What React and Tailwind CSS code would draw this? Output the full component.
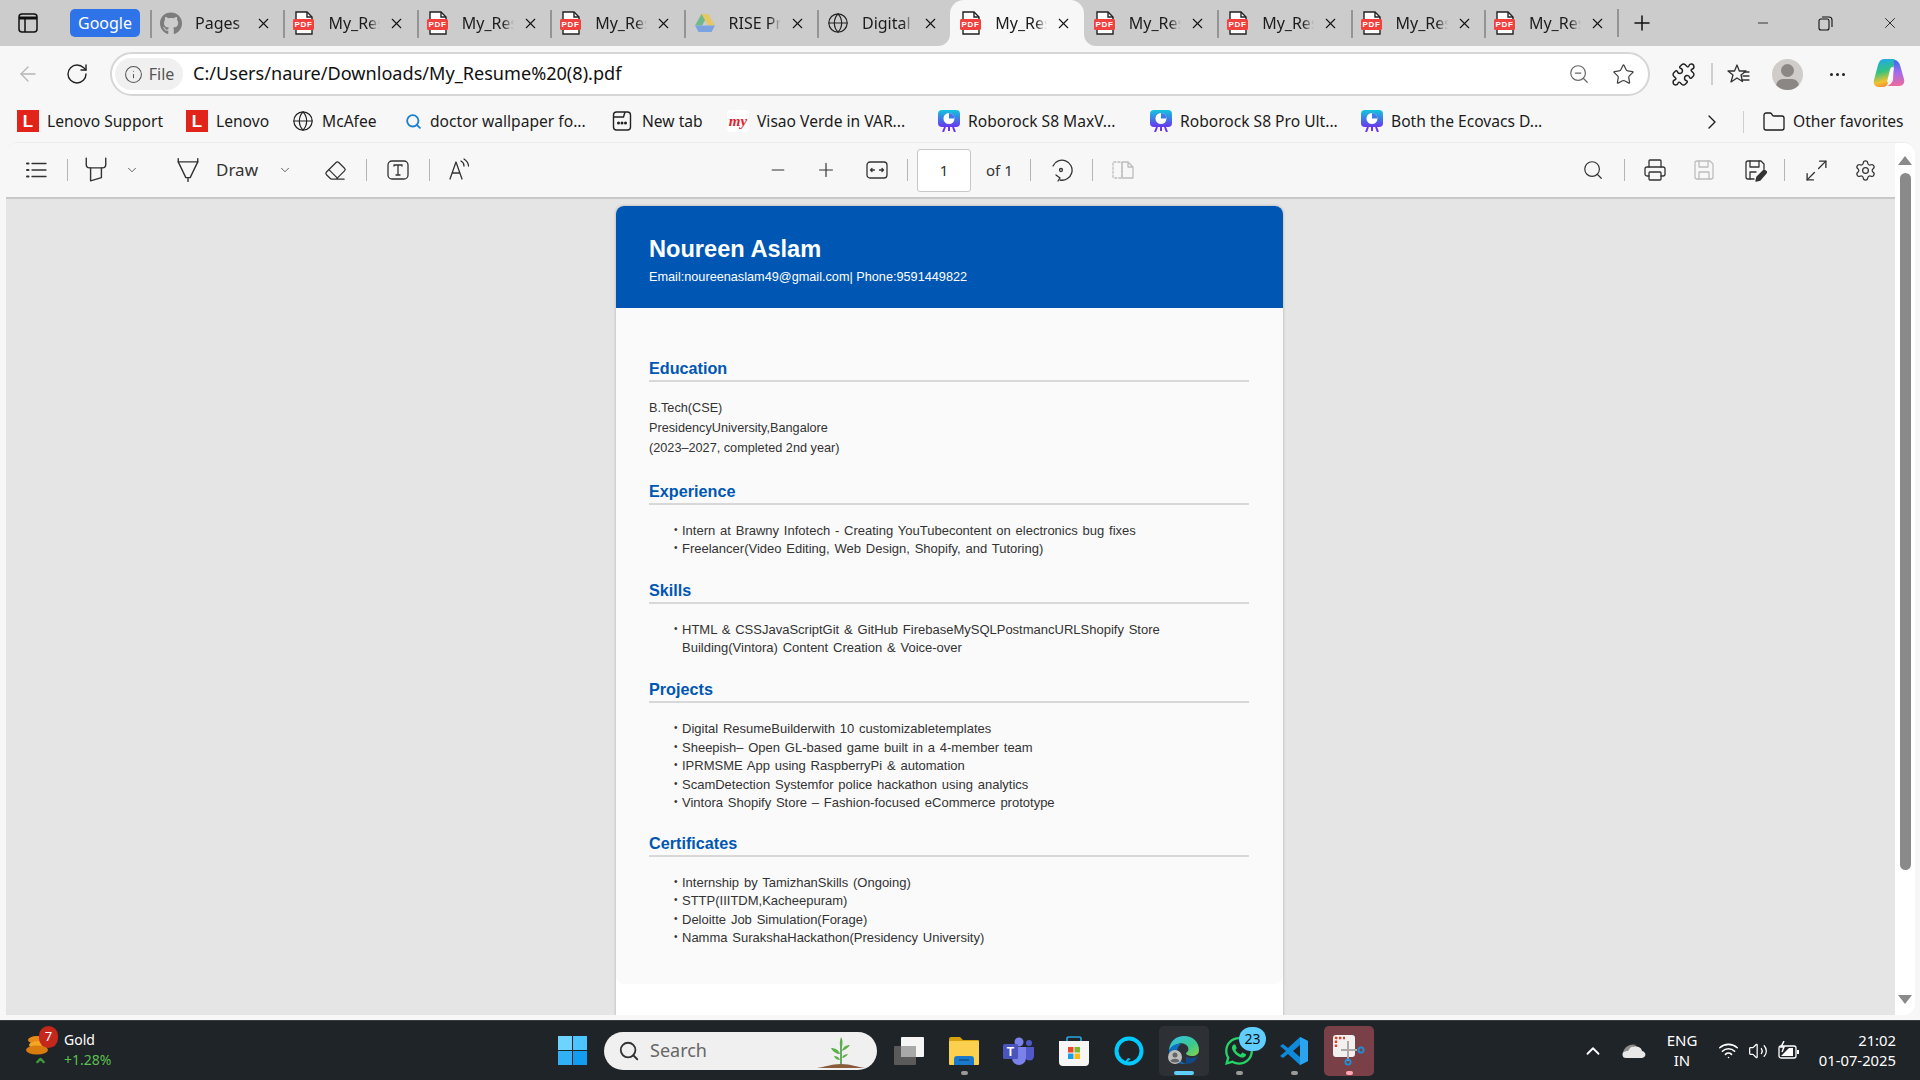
import React from 'react';
import { ArrowLeft, Info, ZoomOut, Star, X, Plus, Minus, Globe, Search, ChevronDown, ChevronRight, ChevronUp, Eraser, Settings, Printer, Wifi, Volume2, Maximize2, Folder, RotateCw, Puzzle } from 'lucide-react';
import { FaGithub, FaWhatsapp } from 'react-icons/fa';

// favicons
const PdfIcon = () => (
  <svg width="21" height="24" viewBox="0 0 21 24" className="shrink-0">
    <path d="M3 1h11l5 5v17H3z" fill="#fff" stroke="#222" strokeWidth="1.4" />
    <path d="M14 1v5h5" fill="none" stroke="#222" strokeWidth="1.4" />
    <rect x="0" y="8" width="21" height="11" rx="1.5" fill="#f0413f" />
    <text x="10.5" y="16.4" textAnchor="middle" fontSize="8" fontWeight="700" fontFamily="Liberation Sans" letterSpacing="0.6" fill="#fff">PDF</text>
  </svg>
);

const DriveIcon = () => (
  <svg width="22" height="20" viewBox="0 0 22 20" className="shrink-0">
    <path d="M7.5 1h7L8 12.500H1z" fill="#6fb98a" />
    <path d="M14.500 1 21 12.500h-7L7.500 1z" fill="#e6c765" />
    <path d="M1 12.500h20L17.500 19h-13z" fill="#7ba3e0" />
  </svg>
);

const LenovoIcon = () => (
  <div className="w-[22px] h-[22px] bg-[#e2231a] flex items-center justify-center text-white font-bold text-[17px] font-['Liberation_Sans'] shrink-0">L</div>
);

const NewTabIcon = () => (
  <svg width="20" height="22" viewBox="0 0 20 22" fill="none" stroke="#222" strokeWidth="1.4" className="shrink-0">
    <rect x="1.500" y="2" width="17" height="18" rx="3" />
    <path d="M1.500 7h10l1.500-5" />
    <circle cx="6.500" cy="13" r="0.8" fill="#222" />
    <circle cx="10" cy="13" r="0.8" fill="#222" />
    <circle cx="13.500" cy="13" r="0.8" fill="#222" />
  </svg>
);

const MyIcon = () => (
  <div className="w-[22px] h-[22px] bg-white rounded flex items-center justify-center text-[#e3202a] italic font-bold text-[15px] font-['Liberation_Serif'] shrink-0">my</div>
);

const RoboIcon = () => (
  <svg width="22" height="22" viewBox="0 0 22 22" className="shrink-0">
    <defs>
      <linearGradient id="robo" x1="0" y1="0" x2="0" y2="1">
        <stop offset="0" stopColor="#12c6dc" />
        <stop offset="1" stopColor="#6a35ee" />
      </linearGradient>
    </defs>
    <rect x="0" y="0" width="22" height="17" rx="4" fill="url(#robo)" />
    <circle cx="11" cy="8.500" r="5.500" fill="#fff" />
    <path d="M11 8.500V3a5.500 5.500 0 0 1 5.500 5.500z" fill="#3a7cee" />
    <path d="M7 17l-2 5M15 17l2 5M11 17v4" stroke="#6a35ee" strokeWidth="2" />
  </svg>
);

// pdf toolbar drawings
const Stroke = ({ w = 24, h = 24, vb = '0 0 24 24', c = '#333', sw = 1.3, children }) => (
  <svg width={w} height={h} viewBox={vb} fill="none" stroke={c} strokeWidth={sw} strokeLinecap="round" strokeLinejoin="round">{children}</svg>
);

const ListIcon = () => <Stroke><path d="M7 5.500h14M7 12h14M7 18.500h14" /><path d="M2 5.500h1.500M2 12h1.500M2 18.500h1.500" strokeWidth="2" /></Stroke>;
const HighlightIcon = () => <Stroke w={26} h={26}><path d="M3 1v6c0 2 1 3 3 3h12c2 0 3-1 3-3V1" /><path d="M7 10v12l10-3v-9" /></Stroke>;
const PenIcon = () => <Stroke w={26} h={26}><path d="M3 1.500v3h18v-3" /><path d="M3 4.500 10 19h4l7-14.500" /><path d="M12 19v3.500" /></Stroke>;
const TextBoxIcon = () => <Stroke><rect x="2" y="3" width="20" height="18" rx="4" /><path d="M8 8V7h8v1M12 7v10M10 17h4" /></Stroke>;
const ReadIcon = () => <Stroke><path d="M3 21 9 4l6 17M5 15h8" /><path d="M14 3c2 1 3 3 3 5M17 1c3 2 4.500 4 4.500 7" /></Stroke>;
const FitIcon = () => <Stroke><rect x="2" y="4" width="20" height="16" rx="3" /><path d="M5.500 12h4M5.500 12l1.500-1.500M5.500 12l1.500 1.500M18.500 12h-4M18.500 12 17 10.500M18.500 12 17 13.500" /></Stroke>;
const RotateIcon = () => <Stroke><path d="M4 8a10 10 0 1 1 7 14" /><path d="M7 19l4 3-2 3" transform="translate(0 -2)" /><circle cx="12" cy="12" r="1.500" /></Stroke>;
const PagesIcon = () => <Stroke c="#bdbdbd"><rect x="2" y="4" width="9" height="16" rx="1" strokeDasharray="2 2" /><path d="M11 4h6l5 5v11H11zM17 4v5h5" /></Stroke>;
const SaveIcon = ({ c = '#333' }) => <Stroke c={c}><path d="M3 5a2 2 0 0 1 2-2h13l3 3v13a2 2 0 0 1-2 2H5a2 2 0 0 1-2-2z" /><path d="M7 3v6h9V3M7 21v-7h10v7" /></Stroke>;
const SaveAsIcon = () => (
  <Stroke><path d="M11 21H5a2 2 0 0 1-2-2V5a2 2 0 0 1 2-2h13l3 3v5" /><path d="M7 3v6h9V3M7 21v-7h6" /><path d="M13 23l1-4 7-7 3 2-7 8z" fill="#333" /></Stroke>
);
const FavListIcon = () => <Stroke><path d="M10 3l2.300 6H19l-5 4 1.500 6.500L10 16l-6 4 2-7-5-4h6.500z" /><path d="M17 10h5M16 14h6M15 18h7" /></Stroke>;

const Copilot = () => (
  <svg width="32" height="32" viewBox="0 0 32 32">
    <defs>
      <linearGradient id="cpa" x1="0.3" y1="0" x2="0.5" y2="1">
        <stop offset="0" stopColor="#1ea8f0" /><stop offset="0.45" stopColor="#34c47c" /><stop offset="0.8" stopColor="#f2c230" /><stop offset="1" stopColor="#f28a30" />
      </linearGradient>
      <linearGradient id="cpb" x1="0.5" y1="0" x2="0.5" y2="1">
        <stop offset="0" stopColor="#2f6ff0" /><stop offset="0.5" stopColor="#a86bea" /><stop offset="1" stopColor="#ee6a9a" />
      </linearGradient>
    </defs>
    <path d="M11 1h9c2 0 2.500 1.500 2 3l-7 21c-1 3-3 4-5 4H6c-4 0-6-3-5-7l4-15c1-4 3-6 6-6z" fill="url(#cpa)" />
    <path d="M21 2c3 0 5 2 6 5l4 14c1 4-1 7-5 7H14c3-1 5-3 6-6z" fill="url(#cpb)" />
    <path d="M19 9c1.500 0 2 1 1.600 2.400l-3 9c-.6 1.800-1.600 3-3 4-.5-1-.3-2 0-3l2-8c.3-2 1-4.400 2.400-4.400z" fill="#fff" />
  </svg>
);

// taskbar drawings
const WinLogo = () => (
  <div className="grid grid-cols-2 gap-[1px] w-[29px] h-[29px]">
    <div className="bg-[#6fd3ff]" /><div className="bg-[#4cc4ff]" />
    <div className="bg-[#30b0f5]" /><div className="bg-[#129df0]" />
  </div>
);

const TaskView = () => (
  <svg width="32" height="30" viewBox="0 0 32 30">
    <rect x="1" y="10" width="22" height="19" rx="1" fill="#5a5a5a" />
    <rect x="8" y="1" width="23" height="20" rx="1" fill="#f5f5f5" />
    <rect x="8" y="10" width="15" height="11" fill="#a8a8a8" />
  </svg>
);

const FolderIcon = () => (
  <svg width="32" height="30" viewBox="0 0 32 30">
    <path d="M1 3a2 2 0 0 1 2-2h9l3 3h15a1 1 0 0 1 1 1v3H1z" fill="#d9a00f" />
    <rect x="1" y="5" width="30" height="24" rx="1" fill="#fbd04f" />
    <path d="M6 29v-6a3 3 0 0 1 3-3h14a3 3 0 0 1 3 3v6z" fill="#1b79c9" />
    <path d="M11 24h10" stroke="#0d4f8f" strokeWidth="1.500" />
  </svg>
);

const TeamsIcon = () => (
  <svg width="32" height="28" viewBox="0 0 32 28">
    <circle cx="16" cy="5" r="4.500" fill="#7b83eb" />
    <circle cx="26" cy="6" r="3" fill="#5059c9" />
    <path d="M22 10h9v9a4 4 0 0 1-9 0z" fill="#5059c9" />
    <path d="M9 10h14v11a7 7 0 0 1-14 0z" fill="#7b83eb" />
    <rect x="0" y="7" width="15" height="15" rx="1.500" fill="#4b53bc" />
    <text x="7.500" y="19" textAnchor="middle" fontSize="12" fontWeight="700" fontFamily="Liberation Sans" fill="#fff">T</text>
  </svg>
);

const StoreIcon = () => (
  <svg width="30" height="30" viewBox="0 0 30 30">
    <path d="M8 6V2.500C8 1.500 9 1 10 1h10c1 0 2 .5 2 1.500V6" fill="none" stroke="#27a8e0" strokeWidth="1.600" />
    <path d="M0 5h30v21a4 4 0 0 1-4 4H4a4 4 0 0 1-4-4z" fill="#f6f6f6" />
    <rect x="9" y="11" width="5.500" height="5.500" fill="#e8492b" />
    <rect x="15.500" y="11" width="5.500" height="5.500" fill="#7db92a" />
    <rect x="9" y="17.500" width="5.500" height="5.500" fill="#1a9fe5" />
    <rect x="15.500" y="17.500" width="5.500" height="5.500" fill="#fdb813" />
  </svg>
);

const AlexaIcon = () => (
  <svg width="30" height="30" viewBox="0 0 30 30">
    <circle cx="15" cy="15" r="12.500" fill="none" stroke="#00caff" strokeWidth="4" />
    <path d="M9 28l5-6 3 1z" fill="#00caff" />
  </svg>
);

const EdgeIcon = () => (
  <svg width="32" height="32" viewBox="0 0 32 32">
    <defs>
      <linearGradient id="edg" x1="0" y1="0" x2="1" y2="1">
        <stop offset="0" stopColor="#35c1f1" /><stop offset="0.6" stopColor="#3ac98d" /><stop offset="1" stopColor="#8ed24a" />
      </linearGradient>
    </defs>
    <path d="M1 15C2 6 8 1 16 1c9 0 15 6 15 14 0 4-3 6-7 6-3 0-6-1-6-3 2-1 3-3 2-6-2-4-8-5-12-2-4 2-6 5-7 5z" fill="url(#edg)" />
    <path d="M1 15c3-5 8-7 12-6-4 3-5 8-3 13 2 4 5 6 8 7-8 1-18-5-17-14z" fill="#0c6fc2" />
    <path d="M18 29c6 0 10-3 12-8-3 2-8 3-12 1z" fill="#114a8b" />
    <circle cx="7" cy="22" r="7" fill="#bdbdbd" />
    <circle cx="7" cy="20" r="2.500" fill="#666" />
    <path d="M2.500 26c1-3 8-3 9 0-2 2-7 2-9 0z" fill="#666" />
  </svg>
);

const VsCode = () => (
  <svg width="30" height="30" viewBox="0 0 30 30">
    <path d="M21 1l8 4v20l-8 4L9 18l-5 4-3-2 6-5-6-5 3-2 5 4z" fill="#0f8ad8" />
    <path d="M21 1l8 4v20l-8 4z" fill="#2aa4ee" />
    <path d="M21 9l-7 6 7 6z" fill="#1f2428" />
  </svg>
);

const SnipIcon = () => (
  <svg width="32" height="32" viewBox="0 0 32 32">
    <rect x="0" y="0" width="22" height="22" rx="3" fill="#f3f1f0" />
    <path d="M3 12V3h9" fill="none" stroke="#d9432a" strokeWidth="2.400" strokeDasharray="2.400 1.600" />
    <path d="M15 6v20M8 15h16" stroke="#b0a9a9" strokeWidth="2" />
    <circle cx="15" cy="27" r="2.600" fill="none" stroke="#1c8fd8" strokeWidth="1.800" />
    <circle cx="28" cy="15" r="2.600" fill="none" stroke="#1c8fd8" strokeWidth="1.800" />
  </svg>
);

const Plant = () => (
  <svg width="48" height="34" viewBox="0 0 48 34">
    <path d="M0 32c8-1 14-4 24-4s16 3 24 4z" fill="#8a5a3a" />
    <path d="M24 29V8" stroke="#3f8f3a" strokeWidth="1.500" />
    <path d="M24 14C22 8 23 4 24 1c2 3 2 8 0 13zM23 18c-3 0-7-2-9-6 4 0 8 2 9 6zM25 15c3-1 6-3 8-6-4 0-7 2-8 6zM23 24c-2 0-5-1-6-4 3 0 5 1 6 4zM25 22c2 0 5-2 6-4-3 0-5 1-6 4z" fill="#5bb04a" />
  </svg>
);

const Coins = () => (
  <svg width="24" height="20" viewBox="0 0 24 20">
    <ellipse cx="11" cy="5" rx="9" ry="4" fill="#e88a17" />
    <ellipse cx="13" cy="10" rx="10" ry="4" fill="#f5a623" />
    <ellipse cx="11" cy="15" rx="11" ry="4.500" fill="#d97c10" />
  </svg>
);

const OneDrive = () => (
  <svg width="24" height="16" viewBox="0 0 24 16">
    <path d="M5 8a6 6 0 0 1 11-3c-3 0-5 1-6 3z" fill="#9a9a9a" />
    <path d="M4 15a3.500 3.500 0 0 1 0-7c1-3 4-4.500 7-4 2-1 8-1 9 4 5 1 4 7 0 7z" fill="#e8e8e8" />
    <path d="M1 9c2-6 8-9 14-7-4 0-7 2-9 6-2 0-4 0-5 1z" fill="#8f8f8f" />
  </svg>
);

const Battery = () => (
  <svg width="22" height="20" viewBox="0 0 22 20" fill="none" stroke="#fff" strokeWidth="1.300">
    <rect x="1" y="5" width="17" height="12" rx="2" />
    <path d="M20 9v4" strokeWidth="2" />
    <path d="M3 15l8-8h4v8z" fill="#fff" stroke="none" />
    <path d="M6 0 3 6h3l-2 5" strokeWidth="1.500" />
  </svg>
);

// data
const TABS = [
  { icon: <div className="w-[22px] flex justify-center shrink-0"><FaGithub className="text-[#7c7c7c]" size={23} /></div>, label: 'Pages' },
  { label: 'My_Resume' },
  { label: 'My_Resume' },
  { label: 'My_Resume' },
  { icon: <DriveIcon />, label: 'RISE Program' },
  { icon: <Globe size={22} strokeWidth={1.3} className="text-[#222] shrink-0" />, label: 'Digital', corner: 'br' },
  { label: 'My_Resume', active: true },
  { label: 'My_Resume', corner: 'bl', noSep: true },
  { label: 'My_Resume' },
  { label: 'My_Resume' },
  { label: 'My_Resume' },
];

const BOOKMARKS = [
  { icon: <LenovoIcon />, label: 'Lenovo Support', w: 'w-[169px]' },
  { icon: <LenovoIcon />, label: 'Lenovo', w: 'w-[106px]' },
  { icon: <Globe size={22} strokeWidth={1.3} className="text-[#222] shrink-0" />, label: 'McAfee', w: 'w-[112px]' },
  { icon: <div className="w-[18px] flex justify-center shrink-0"><Search size={17} strokeWidth={2.600} className="text-[#1a7fd0]" /></div>, label: 'doctor wallpaper fo...', w: 'w-[208px]', gap: 'ml-[8px]' },
  { icon: <NewTabIcon />, label: 'New tab', w: 'w-[115px]', gap: 'ml-[10px]' },
  { icon: <MyIcon />, label: 'Visao Verde in VAR...', w: 'w-[211px]' },
  { icon: <RoboIcon />, label: 'Roborock S8 MaxV...', w: 'w-[212px]' },
  { icon: <RoboIcon />, label: 'Roborock S8 Pro Ult...', w: 'w-[211px]' },
  { icon: <RoboIcon />, label: 'Both the Ecovacs D...', w: 'w-[345px]' },
];

const SECTIONS = [
  {
    title: 'Experience', top: 'mt-[23px]', listTop: 'mt-[17px]', lh: 'leading-[18px]',
    items: ['Intern at Brawny Infotech - Creating YouTubecontent on electronics bug fixes', 'Freelancer(Video Editing, Web Design, Shopify, and Tutoring)'],
  },
  {
    title: 'Skills', top: 'mt-[22px]', listTop: 'mt-[17px]', lh: 'leading-[18px]',
    items: [<>HTML &amp; CSSJavaScriptGit &amp; GitHub FirebaseMySQLPostmancURLShopify Store<br />Building(Vintora) Content Creation &amp; Voice-over</>],
  },
  {
    title: 'Projects', top: 'mt-[22px]', listTop: 'mt-[17px]', lh: 'leading-[18.500px]',
    items: ['Digital ResumeBuilderwith 10 customizabletemplates', 'Sheepish– Open GL-based game built in a 4-member team', 'IPRMSME App using RaspberryPi & automation', 'ScamDetection Systemfor police hackathon using analytics', 'Vintora Shopify Store – Fashion-focused eCommerce prototype'],
  },
  {
    title: 'Certificates', top: 'mt-[20px]', listTop: 'mt-[17px]', lh: 'leading-[18.500px]',
    items: ['Internship by TamizhanSkills (Ongoing)', 'STTP(IIITDM,Kacheepuram)', 'Deloitte Job Simulation(Forage)', 'Namma SurakshaHackathon(Presidency University)'],
  },
];

function Tab({ tab }) {
  const inner = tab.active ? 'bg-[#f7f7f7] rounded-t-[14px]' : 'bg-[#cccccc]';
  const corner = tab.corner === 'br' ? 'rounded-br-[12px]' : tab.corner === 'bl' ? 'rounded-bl-[12px]' : '';
  return (
    <div className={`w-[133.4px] h-[46px] shrink-0 ${tab.corner ? 'bg-[#f7f7f7]' : 'bg-[#cccccc]'}`}>
      <div className={`relative w-full h-full flex items-center pl-[10px] ${inner} ${corner}`}>
        {!tab.active && !tab.noSep && <div className="absolute left-0 top-[10px] h-[28px] w-[2px] bg-[#949494]" />}
        {tab.icon || <PdfIcon />}
        <span className={`absolute left-[45px] w-[52px] overflow-hidden whitespace-nowrap text-[16px] text-[#1c1c1c] [mask-image:linear-gradient(to_right,black_78%,transparent)]`}>{tab.label}</span>
        <X size={17} strokeWidth={1.500} className="absolute left-[105px] text-[#111]" />
      </div>
    </div>
  );
}

const Sep = ({ cls }) => <div className={`w-[1px] h-[22px] bg-[#b5b5b5] shrink-0 ${cls}`} />;
const Tool = ({ cls = '', w = 'w-[40px]', children }) => <div className={`h-[40px] flex items-center justify-center shrink-0 ${w} ${cls}`}>{children}</div>;

function PdfToolbar() {
  return (
    <div className="h-[56px] bg-[#f7f7f7] border-b-2 border-[#c8c8c8] rounded-tl-[12px] flex items-center pl-[11px] text-[#333]">
      <Tool><ListIcon /></Tool>
      <Sep cls="ml-[10px]" />
      <Tool cls="ml-[8px]"><HighlightIcon /></Tool>
      <Tool cls="ml-[8px]" w="w-[16px]"><ChevronDown size={14} strokeWidth={1.300} /></Tool>
      <Tool cls="ml-[28px]"><PenIcon /></Tool>
      <span className="ml-[8px] w-[43px] text-[17px] text-[#333]">Draw</span>
      <Tool cls="ml-[18px]" w="w-[16px]"><ChevronDown size={14} strokeWidth={1.300} /></Tool>
      <Tool cls="ml-[22px]"><Eraser size={23} strokeWidth={1.300} /></Tool>
      <Sep cls="ml-[11px]" />
      <Tool cls="ml-[11px]"><TextBoxIcon /></Tool>
      <Sep cls="ml-[11px]" />
      <Tool cls="ml-[9px]"><ReadIcon /></Tool>

      <Tool cls="ml-[279px]"><Minus size={20} strokeWidth={1.300} /></Tool>
      <Tool cls="ml-[8px]"><Plus size={22} strokeWidth={1.300} /></Tool>
      <Tool cls="ml-[11px]"><FitIcon /></Tool>
      <Sep cls="ml-[10px]" />
      <div className="ml-[9px] w-[54px] h-[43px] bg-white border border-[#c8c8c8] rounded-[3px] flex items-center justify-center text-[15px] shrink-0">1</div>
      <span className="ml-[15px] w-[28px] text-[15px] whitespace-nowrap">of 1</span>
      <Sep cls="ml-[16px]" />
      <Tool cls="ml-[10px]"><RotateIcon /></Tool>
      <Sep cls="ml-[11px]" />
      <Tool cls="ml-[10px]"><PagesIcon /></Tool>

      <Tool cls="ml-auto"><Search size={22} strokeWidth={1.300} /></Tool>
      <Sep cls="ml-[11px]" />
      <Tool cls="ml-[10px]"><Printer size={24} strokeWidth={1.300} /></Tool>
      <Tool cls="ml-[9px]"><SaveIcon c="#bdbdbd" /></Tool>
      <Tool cls="ml-[11px]"><SaveAsIcon /></Tool>
      <Sep cls="ml-[9px]" />
      <Tool cls="ml-[11px]"><Maximize2 size={25} strokeWidth={1.300} /></Tool>
      <Tool cls="ml-[9px] mr-[10px]"><Settings size={23} strokeWidth={1.300} /></Tool>
    </div>
  );
}

function Heading({ title, cls = '' }) {
  return (
    <h2 className={`h-[24px] pb-[2px] border-b-2 border-[#d8d8d8] text-[16.200px] leading-[20px] font-bold text-[#0057b3] ${cls}`}>{title}</h2>
  );
}

function Resume() {
  return (
    <div className="w-[667px] h-[900px] bg-white rounded-t-[8px] shadow-[0_0_3px_rgba(0,0,0,0.25)] shrink-0 font-['Liberation_Sans',sans-serif]">
      <div className="bg-[#fafafa] rounded-[8px] pb-[36px]">
        <div className="h-[102px] bg-[#0057b3] rounded-t-[8px] pl-[33px] pt-[29px] text-white">
          <div className="text-[23.600px] leading-[28px] font-bold">Noureen Aslam</div>
          <div className="mt-[6px] text-[12.700px] leading-[16px]">Email:noureenaslam49@gmail.com| Phone:9591449822</div>
        </div>
        <div className="pl-[33px] pr-[34px] pt-[50px]">
          <Heading title="Education" />
          <div className="mt-[16px] text-[12.700px] leading-[20px] text-[#333]">
            <div>B.Tech(CSE)</div>
            <div>PresidencyUniversity,Bangalore</div>
            <div>(2023–2027, completed 2nd year)</div>
          </div>
          {SECTIONS.map((s) => (
            <section key={s.title}>
              <Heading title={s.title} cls={s.top} />
              <ul className={`${s.listTop} pl-[33px] text-[13px] [word-spacing:1.200px] text-[#333] ${s.lh}`}>
                {s.items.map((item, i) => (
                  <li key={i} className="relative">
                    <span className="absolute left-[-8px] top-[-1px] text-[10px]">•</span>
                    {item}
                  </li>
                ))}
              </ul>
            </section>
          ))}
        </div>
      </div>
    </div>
  );
}

function TaskSlot({ children, dot, active, cls = '' }) {
  return (
    <div className={`relative w-[50px] h-[50px] rounded-[5px] flex items-center justify-center shrink-0 ${cls}`}>
      {children}
      {dot && <div className={`absolute bottom-[1px] h-[4px] rounded-full ${active ? 'w-[20px] bg-[#60cdff]' : 'w-[7px] bg-[#9a9a9a]'}`} />}
    </div>
  );
}

function Taskbar() {
  return (
    <div className="h-[60px] bg-[#1f2428] border-t border-[#3a3d40] flex items-center text-white shrink-0">
      <div className="relative w-[558px] h-full shrink-0 pl-[26px] flex items-center">
        <div className="relative w-[38px] flex flex-col items-start">
          <Coins />
          <div className="absolute left-[13px] -top-[9px] w-[19px] h-[22px] rounded-full bg-[#c4271b] flex items-center justify-center text-[13px]">7</div>
          <ChevronUp size={13} strokeWidth={4} className="text-[#3f9b3a] mt-[-1px] ml-[8px]" />
        </div>
        <div className="text-[14px] leading-[20px] -mt-[2px]">
          <div>Gold</div>
          <div className="text-[#5cbf4f]">+1.28%</div>
        </div>
      </div>
      <WinLogo />
      <div className="relative ml-[17px] w-[273px] h-[38px] rounded-full bg-[#f0f0f0] flex items-center pl-[14px] shrink-0 overflow-hidden">
        <Search size={22} strokeWidth={2} className="text-[#333]" />
        <span className="ml-[10px] text-[18px] text-[#666]">Search</span>
        <div className="absolute right-[12px] bottom-0"><Plant /></div>
      </div>
      <div className="ml-[7px] flex gap-[5px]">
        <TaskSlot><TaskView /></TaskSlot>
        <TaskSlot dot><FolderIcon /></TaskSlot>
        <TaskSlot><TeamsIcon /></TaskSlot>
        <TaskSlot><StoreIcon /></TaskSlot>
        <TaskSlot><AlexaIcon /></TaskSlot>
        <TaskSlot dot active cls="bg-[#2d3135]"><EdgeIcon /></TaskSlot>
        <TaskSlot dot>
          <FaWhatsapp size={32} className="text-[#25d366]" />
          <div className="absolute right-[-2px] top-[1px] w-[27px] h-[24px] rounded-full bg-[#60cdff] text-[#111] flex items-center justify-center text-[14px]">23</div>
        </TaskSlot>
        <TaskSlot dot><VsCode /></TaskSlot>
        <TaskSlot cls="bg-[#7a4048]"><SnipIcon />
          <div className="absolute bottom-[1px] w-[7px] h-[4px] rounded-full bg-[#ffa6b3]" />
        </TaskSlot>
      </div>
      <ChevronUp size={22} strokeWidth={2} className="ml-[208px]" />
      <div className="ml-[18px]"><OneDrive /></div>
      <div className="ml-[11px] w-[50px] text-center text-[15px] leading-[20px] -mt-[2px]">
        <div>ENG</div>
        <div>IN</div>
      </div>
      <Wifi size={21} strokeWidth={1.800} className="ml-[11px]" />
      <Volume2 size={20} strokeWidth={1.500} className="ml-[9px]" />
      <div className="ml-[10px]"><Battery /></div>
      <div className="ml-auto mr-[24px] text-right text-[14.800px] leading-[20px] -mt-[2px]">
        <div>21:02</div>
        <div>01-07-2025</div>
      </div>
    </div>
  );
}

export default function App() {
  return (
    <div className="w-[1920px] h-[1080px] overflow-hidden flex flex-col bg-[#f7f7f7] font-['Noto_Sans',sans-serif] text-[#1c1c1c]">
      {/* tab strip */}
      <div className="h-[46px] bg-[#cccccc] flex items-center shrink-0">
        <div className="w-[56px] flex justify-center shrink-0">
          <svg width="20" height="20" viewBox="0 0 20 20" fill="none" stroke="#111" strokeWidth="1.500">
            <rect x="1" y="1" width="18" height="18" rx="3" />
            <path d="M1 5h18" strokeWidth="3" />
            <path d="M7 5v14" />
          </svg>
        </div>
        <div className="ml-[14px] w-[70px] h-[28px] rounded-[5px] bg-[#2f73e8] text-white flex items-center justify-center text-[16px] shrink-0">Google</div>
        <div className="ml-[10px] flex">
          {TABS.map((t, i) => <Tab key={i} tab={t} />)}
        </div>
        <div className="w-[2px] h-[28px] bg-[#949494] shrink-0" />
        <Plus size={24} strokeWidth={1.500} className="ml-[11px] text-[#111]" />
        <Minus size={16} strokeWidth={1.200} className="ml-[101px] text-[#111]" />
        <svg width="15" height="15" viewBox="0 0 15 15" fill="none" stroke="#111" strokeWidth="1.100" className="ml-[47px]">
          <rect x="1" y="3" width="10" height="11" rx="2" />
          <path d="M4 1h7a3 3 0 0 1 3 3v7" />
        </svg>
        <X size={18} strokeWidth={1.100} className="ml-[48px] text-[#111]" />
      </div>

      {/* address bar */}
      <div className="h-[52px] flex items-center shrink-0 pt-[4px]">
        <ArrowLeft size={24} strokeWidth={1.300} className="ml-[16px] text-[#b5b5b5]" />
        <RotateCw size={24} strokeWidth={1.400} className="ml-[25px] text-[#222]" />
        <div className="ml-[21px] w-[1540px] h-[44px] bg-white border-2 border-[#d6d6d6] rounded-full flex items-center pl-[3px] shrink-0">
          <div className="h-[32px] w-[68px] rounded-full bg-[#f0f0f0] flex items-center justify-center gap-[6px] text-[#555] text-[16px]">
            <Info size={19} strokeWidth={1.300} />
            <span>File</span>
          </div>
          <span className="ml-[10px] text-[18.100px] text-[#111]">C:/Users/naure/Downloads/My_Resume%20(8).pdf</span>
          <ZoomOut size={22} strokeWidth={1.300} className="ml-auto text-[#666]" />
          <Star size={23} strokeWidth={1.300} className="ml-[22px] mr-[13px] text-[#444]" />
        </div>
        <Puzzle size={25} strokeWidth={1.400} className="ml-[21px] text-[#222]" />
        <div className="ml-[15px] w-[2px] h-[22px] bg-[#cfcfcf]" />
        <div className="ml-[14px]"><FavListIcon /></div>
        <div className="ml-[21px] w-[31px] h-[31px] rounded-full bg-[#cfccc9] relative overflow-hidden">
          <div className="absolute left-[9px] top-[5px] w-[13px] h-[13px] rounded-full bg-[#8a8784]" />
          <div className="absolute left-[4px] top-[20px] w-[23px] h-[14px] rounded-full bg-[#8a8784]" />
        </div>
        <div className="ml-[27px] flex gap-[3px]">
          <div className="w-[3px] h-[3px] rounded-full bg-[#222]" />
          <div className="w-[3px] h-[3px] rounded-full bg-[#222]" />
          <div className="w-[3px] h-[3px] rounded-full bg-[#222]" />
        </div>
        <div className="ml-[28px]"><Copilot /></div>
      </div>

      {/* favorites bar */}
      <div className="h-[44px] flex items-center pl-[17px] pt-[3px] shrink-0 text-[15.600px]">
        {BOOKMARKS.map((b) => (
          <div key={b.label} className={`flex items-center shrink-0 ${b.w}`}>
            {b.icon}
            <span className={`whitespace-nowrap ${b.gap || 'ml-[8px]'}`}>{b.label}</span>
          </div>
        ))}
        <ChevronRight size={24} strokeWidth={1.400} className="-ml-[6px]" />
        <div className="ml-[19px] w-[1px] h-[22px] bg-[#cfcfcf]" />
        <Folder size={24} strokeWidth={1.300} className="ml-[18px]" />
        <span className="ml-[7px] whitespace-nowrap">Other favorites</span>
      </div>

      {/* pdf viewer */}
      <div className="h-[873px] mx-[6px] mr-[5px] flex rounded-t-[12px] rounded-br-[12px] shrink-0 overflow-hidden bg-white border-t border-[#ececec]">
        <div className="w-[1889px] flex flex-col shrink-0">
          <PdfToolbar />
          <div className="flex-1 bg-[#e5e5e5] overflow-hidden flex justify-center pt-[7px] pr-[2px]">
            <Resume />
          </div>
        </div>
        <div className="flex-1 flex flex-col items-center pt-[13px] bg-white">
          <div className="w-0 h-0 border-x-[7px] border-x-transparent border-b-[9px] border-b-[#8a8a8a]" />
          <div className="w-[11px] h-[697px] mt-[8px] rounded-full bg-[#8a8a8a]" />
          <div className="w-0 h-0 mt-[125px] border-x-[7px] border-x-transparent border-t-[9px] border-t-[#8a8a8a]" />
        </div>
      </div>

      <div className="h-[5px] shrink-0" />
      <Taskbar />
    </div>
  );
}
